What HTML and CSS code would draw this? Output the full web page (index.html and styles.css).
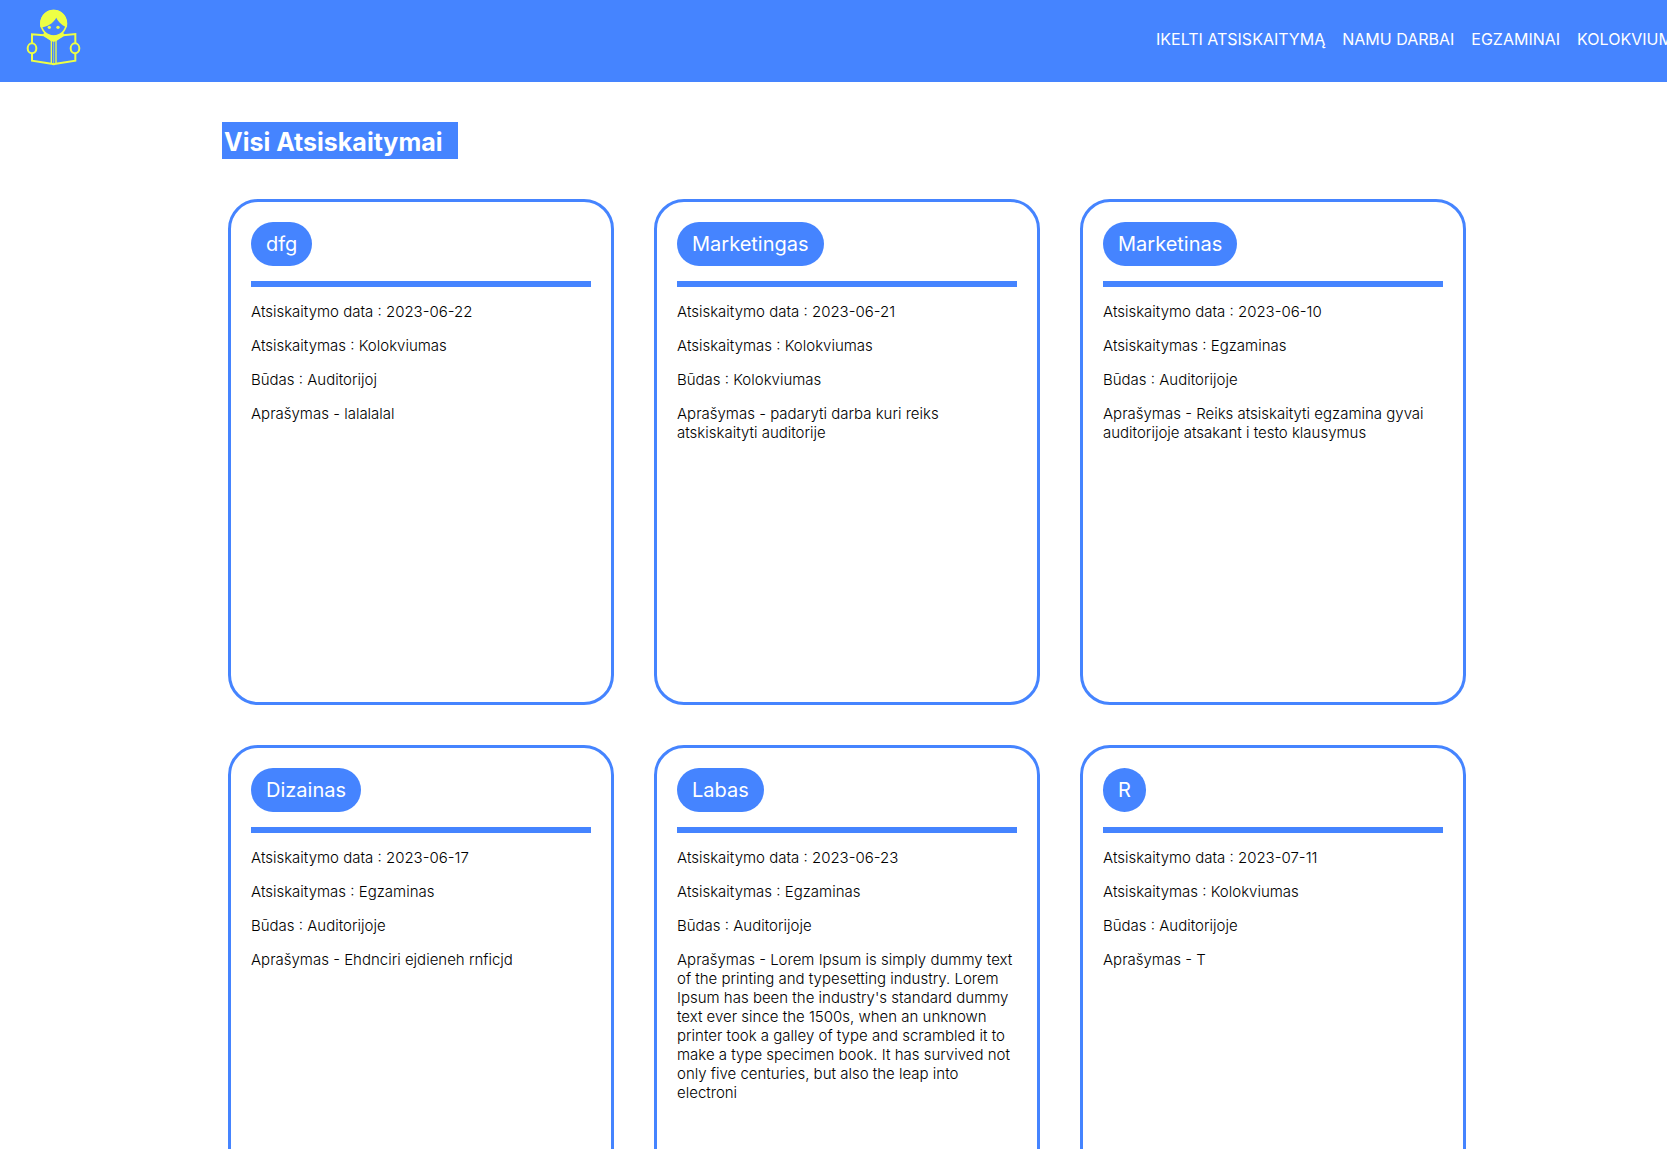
FILE: index.html
```html
<!DOCTYPE html>
<html lang="lt">
<head>
  <meta charset="utf-8">
  <meta name="viewport" content="width=device-width, initial-scale=1">
  <title>Visi Atsiskaitymai</title>
  <link rel="stylesheet" href="styles.css">
</head>
<body>
  <header class="header">
    <a class="logo" href="#" aria-label="Atsiskaitymai">
      <svg class="logo-icon" viewBox="78 27 165 171" aria-hidden="true">
        <circle cx="161" cy="70" r="38" fill="none" stroke="#edff45" stroke-width="5"/>
        <path fill="#edff45" d="M121 82C116 52 135 29 161 29s45 23 40 53c-12-4-26-15-32-29-10 17-26 28-48 29z"/>
        <circle cx="148" cy="82" r="5" fill="#edff45"/>
        <circle cx="174" cy="82" r="5" fill="#edff45"/>
        <path fill="#edff45" d="M134 96c18 15 36 15 54 0l6 9-26 19h-14l-26-19z"/>
        <g fill="none" stroke="#edff45" stroke-width="6">
          <path d="M96 129v-26l36 3 24 14 5 2 5-2 24-14 36-4v27"/>
          <path d="M96 160v22l58 9c5 2 9 2 14 0l58-9v-22"/>
          <ellipse cx="96" cy="145" rx="13" ry="15"/>
          <ellipse cx="225" cy="145" rx="13" ry="15"/>
        </g>
        <path fill="none" stroke="#edff45" stroke-width="4" d="M154 120v71M168 120v71"/>
        <path fill="none" stroke="#edff45" stroke-width="2" d="M161 122v70"/>
      </svg>
    </a>
    <nav class="nav">
      <a class="nav-link" href="#">IKELTI ATSISKAITYMĄ</a>
      <a class="nav-link" href="#">NAMU DARBAI</a>
      <a class="nav-link" href="#">EGZAMINAI</a>
      <a class="nav-link" href="#">KOLOKVIUMAI</a>
    </nav>
  </header>
  <main class="main">
    <h1 class="title">Visi Atsiskaitymai</h1>
    <div class="cards">
      <article class="card">
        <h2 class="subject">dfg</h2>
        <hr class="rule">
        <p class="detail">Atsiskaitymo data : 2023-06-22</p>
        <p class="detail">Atsiskaitymas : Kolokviumas</p>
        <p class="detail">Būdas : Auditorijoj</p>
        <p class="detail">Aprašymas - lalalalal</p>
      </article>
      <article class="card">
        <h2 class="subject">Marketingas</h2>
        <hr class="rule">
        <p class="detail">Atsiskaitymo data : 2023-06-21</p>
        <p class="detail">Atsiskaitymas : Kolokviumas</p>
        <p class="detail">Būdas : Kolokviumas</p>
        <p class="detail">Aprašymas - padaryti darba kuri reiks atskiskaityti auditorije</p>
      </article>
      <article class="card">
        <h2 class="subject">Marketinas</h2>
        <hr class="rule">
        <p class="detail">Atsiskaitymo data : 2023-06-10</p>
        <p class="detail">Atsiskaitymas : Egzaminas</p>
        <p class="detail">Būdas : Auditorijoje</p>
        <p class="detail">Aprašymas - Reiks atsiskaityti egzamina gyvai auditorijoje atsakant i testo klausymus</p>
      </article>
      <article class="card">
        <h2 class="subject">Dizainas</h2>
        <hr class="rule">
        <p class="detail">Atsiskaitymo data : 2023-06-17</p>
        <p class="detail">Atsiskaitymas : Egzaminas</p>
        <p class="detail">Būdas : Auditorijoje</p>
        <p class="detail">Aprašymas - Ehdnciri ejdieneh rnficjd</p>
      </article>
      <article class="card">
        <h2 class="subject">Labas</h2>
        <hr class="rule">
        <p class="detail">Atsiskaitymo data : 2023-06-23</p>
        <p class="detail">Atsiskaitymas : Egzaminas</p>
        <p class="detail">Būdas : Auditorijoje</p>
        <p class="detail">Aprašymas - Lorem Ipsum is simply dummy text of the printing and typesetting industry. Lorem Ipsum has been the industry's standard dummy text ever since the 1500s, when an unknown printer took a galley of type and scrambled it to make a type specimen book. It has survived not only five centuries, but also the leap into electroni</p>
      </article>
      <article class="card">
        <h2 class="subject">R</h2>
        <hr class="rule">
        <p class="detail">Atsiskaitymo data : 2023-07-11</p>
        <p class="detail">Atsiskaitymas : Kolokviumas</p>
        <p class="detail">Būdas : Auditorijoje</p>
        <p class="detail">Aprašymas - T</p>
      </article>
    </div>
  </main>
</body>
</html>
```
FILE: styles.css
```css
* {
  box-sizing: border-box;
}

body {
  margin: 0;
  background: #fff;
  color: #000;
  font-family: Inter, "Liberation Sans", sans-serif;
}

.header {
  display: flex;
  justify-content: space-between;
  align-items: flex-start;
  height: 82px;
  padding-left: 26px;
  background: #4584ff;
}

.logo {
  padding-top: 9px;
}

.logo-icon {
  display: block;
  width: 55px;
  height: 57px;
}

.nav {
  display: flex;
  gap: 17px;
  width: 511px;
  padding-top: 29px;
  overflow: hidden;
}

.nav-link {
  color: #fff;
  font-size: 16px;
  line-height: 20px;
  text-decoration: none;
  white-space: nowrap;
}

.main {
  padding: 40px 201px 40px 222px;
}

.title {
  width: fit-content;
  margin: 0 0 40px;
  padding: 5px 15px 2px 2px;
  background: #4584ff;
  color: #fff;
  font-size: 25px;
  font-weight: 700;
  line-height: 30px;
}

.cards {
  display: grid;
  grid-template-columns: repeat(3, 1fr);
  gap: 40px;
  padding-left: 6px;
}

.card {
  min-height: 506px;
  padding: 20px;
  border: 3px solid #4584ff;
  border-radius: 30px;
}

.subject {
  width: fit-content;
  margin: 0;
  padding: 10px 15px;
  border-radius: 25px;
  background: #4584ff;
  color: #fff;
  font-size: 20px;
  font-weight: 400;
  line-height: 24px;
}

.rule {
  height: 6px;
  margin: 15px 0;
  border: 0;
  background: #4584ff;
}

.detail {
  margin: 0 0 15px;
  font-size: 15px;
  font-weight: 300;
  line-height: 19px;
}
```
